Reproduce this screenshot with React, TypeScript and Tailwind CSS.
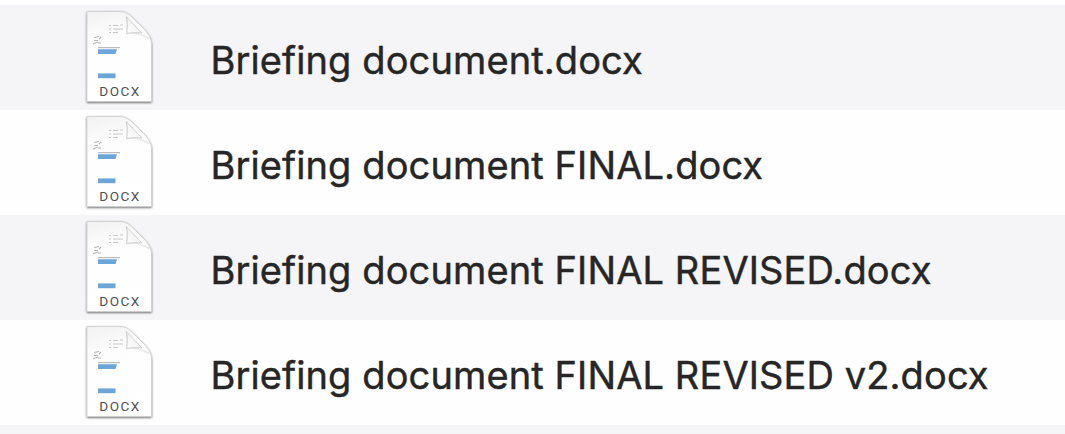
function DocxIcon() {
  return (
    <svg className="h-[105px] w-[86px] shrink-0" viewBox="76 5 86 105" aria-hidden="true">
      <defs>
        <linearGradient id="page" x1="0" y1="0" x2="0.15" y2="1">
          <stop offset="0" stopColor="#f1f1f1" />
          <stop offset="0.3" stopColor="#fdfdfd" />
          <stop offset="1" stopColor="#ffffff" />
        </linearGradient>
        <linearGradient id="fold" x1="0" y1="1" x2="0.7" y2="0.3">
          <stop offset="0" stopColor="#ffffff" />
          <stop offset="1" stopColor="#f0f0f0" />
        </linearGradient>
        <filter id="shadow" x="-10%" y="-10%" width="120%" height="120%">
          <feDropShadow dx="0" dy="1" stdDeviation="1.3" floodColor="#000" floodOpacity="0.6" />
        </filter>
        <filter id="soft" x="-20%" y="-40%" width="140%" height="180%">
          <feGaussianBlur stdDeviation="0.6" />
        </filter>
      </defs>
      <path
        d="M87 11.5H120C126 11.5 130 15 134 19L143 28C148 33 151.500 38 151.500 45V101.500H87Z"
        fill="url(#page)"
        stroke="#c4c4c4"
        strokeWidth="0.6"
        filter="url(#shadow)"
      />
      <g filter="url(#soft)">
        <path d="M109 25.500h2M113 25.500h5M120 25h3M109 29h2M113 29h10M109 32.500h2M113 32.500h5" stroke="#c8c8c8" strokeWidth="1" />
        <path d="M94 37.500l5-1M94 40.500h4M99 39l2-2M93 44l5-2M98 43h3" stroke="#b5b5b5" strokeWidth="1.100" fill="none" />
        <path d="M98 47.700h22" stroke="#a0a4a8" strokeWidth="0.9" />
        <path d="M98 49.300H117L115.500 54H98Z" fill="#6ca5d8" />
        <path d="M98 73.400H115.500V78.200H98Z" fill="#6ca5d8" />
      </g>
      <path
        d="M126.500 16C127.500 22 127.500 27 126.800 33.500C134 32 141 34 149 38.500"
        fill="none"
        stroke="#999"
        strokeWidth="1.500"
        opacity="0.2"
        filter="url(#soft)"
      />
      <path
        d="M126.500 17C127.700 22 127.500 27 126.800 33.500C131 32.500 136 32.500 142 33L127.500 18Z"
        fill="url(#fold)"
        stroke="#c2c2c2"
        strokeWidth="0.700"
      />
      <text
        x="99.300"
        y="96.400"
        fontFamily="Roboto, 'Liberation Sans', sans-serif"
        fontSize="13.600"
        textLength="40"
        lengthAdjust="spacing"
        fill="#505050"
      >
        DOCX
      </text>
    </svg>
  );
}

const files = [
  "Briefing document.docx",
  "Briefing document FINAL.docx",
  "Briefing document FINAL REVISED.docx",
  "Briefing document FINAL REVISED v2.docx",
];

export default function App() {
  return (
    <main className="h-[434px] w-full overflow-hidden bg-[#fefefe] pt-[5px] font-['Inter','Liberation_Sans',sans-serif] text-[#262626]">
      <ul>
        {files.map((name) => (
          <li key={name} className="flex h-[105px] items-center pl-[76px] odd:bg-[#f5f4f6]">
            <DocxIcon />
            <span className="ml-[48.5px] whitespace-nowrap pt-[4px] text-[38px] leading-[48px] tracking-[0.11px] [-webkit-text-stroke:0.45px_#262626]">
              {name}
            </span>
          </li>
        ))}
      </ul>
      <div className="h-[9px] bg-[#f5f4f6]" />
    </main>
  );
}
